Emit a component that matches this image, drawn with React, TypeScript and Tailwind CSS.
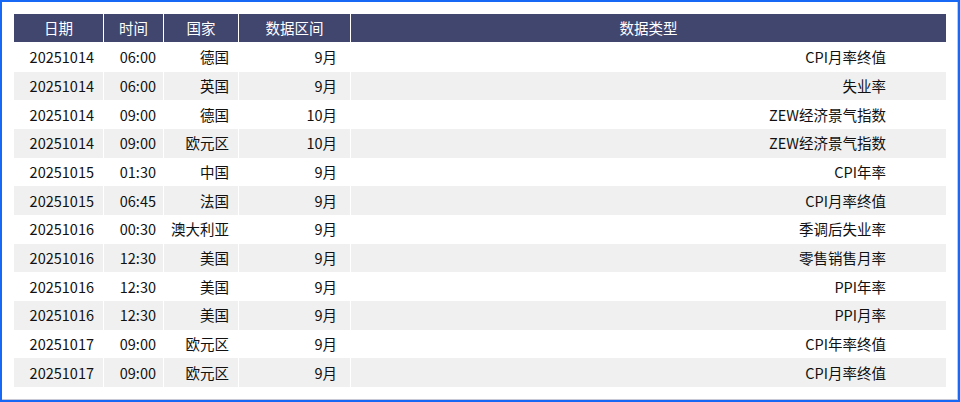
import React from "react";

type Row = {
  date: string;
  time: string;
  country: string;
  period: string;
  kind: string;
};

const rows: Row[] = [
  { date: "20251014", time: "06:00", country: "德国", period: "9月", kind: "CPI月率终值" },
  { date: "20251014", time: "06:00", country: "英国", period: "9月", kind: "失业率" },
  { date: "20251014", time: "09:00", country: "德国", period: "10月", kind: "ZEW经济景气指数" },
  { date: "20251014", time: "09:00", country: "欧元区", period: "10月", kind: "ZEW经济景气指数" },
  { date: "20251015", time: "01:30", country: "中国", period: "9月", kind: "CPI年率" },
  { date: "20251015", time: "06:45", country: "法国", period: "9月", kind: "CPI月率终值" },
  { date: "20251016", time: "00:30", country: "澳大利亚", period: "9月", kind: "季调后失业率" },
  { date: "20251016", time: "12:30", country: "美国", period: "9月", kind: "零售销售月率" },
  { date: "20251016", time: "12:30", country: "美国", period: "9月", kind: "PPI年率" },
  { date: "20251016", time: "12:30", country: "美国", period: "9月", kind: "PPI月率" },
  { date: "20251017", time: "09:00", country: "欧元区", period: "9月", kind: "CPI年率终值" },
  { date: "20251017", time: "09:00", country: "欧元区", period: "9月", kind: "CPI月率终值" },
];

const headers = ["日期", "时间", "国家", "数据区间", "数据类型"];

// fixed column widths, last one takes the rest
const cols = "grid grid-cols-[89px_59px_74px_111px_1fr] gap-x-px";

export default function App() {
  return (
    <div
      className="w-[960px] h-[402px] bg-white border-2 border-[#1769f5] shadow-[inset_-1px_-1px_0_#c9c9d6] px-3 pt-3"
      style={{ fontFamily: '"Noto Sans CJK SC", "Noto Sans", sans-serif' }}
    >
      <div className={`${cols} h-7 mb-px`}>
        {headers.map((h) => (
          <div
            key={h}
            className="bg-[#41466f] text-white text-[14.5px] flex items-center justify-center"
          >
            {h}
          </div>
        ))}
      </div>
      <div className="flex flex-col">
        {rows.map((r, i) => {
          const bg = i % 2 === 1 ? "bg-[#f0f0f0]" : "bg-white";
          return (
            <div key={i} className={`${cols} h-[28.67px] text-[14.5px] text-[#111] tabular-nums`}>
              <div className={`${bg} flex items-center justify-end pr-[9px]`}>{r.date}</div>
              <div className={`${bg} flex items-center justify-end pr-[7px]`}>{r.time}</div>
              <div className={`${bg} flex items-center justify-end pr-[9px]`}>{r.country}</div>
              <div className={`${bg} flex items-center justify-end pr-[13px]`}>{r.period}</div>
              <div className={`${bg} flex items-center justify-end pr-[60px]`}>{r.kind}</div>
            </div>
          );
        })}
      </div>
    </div>
  );
}
